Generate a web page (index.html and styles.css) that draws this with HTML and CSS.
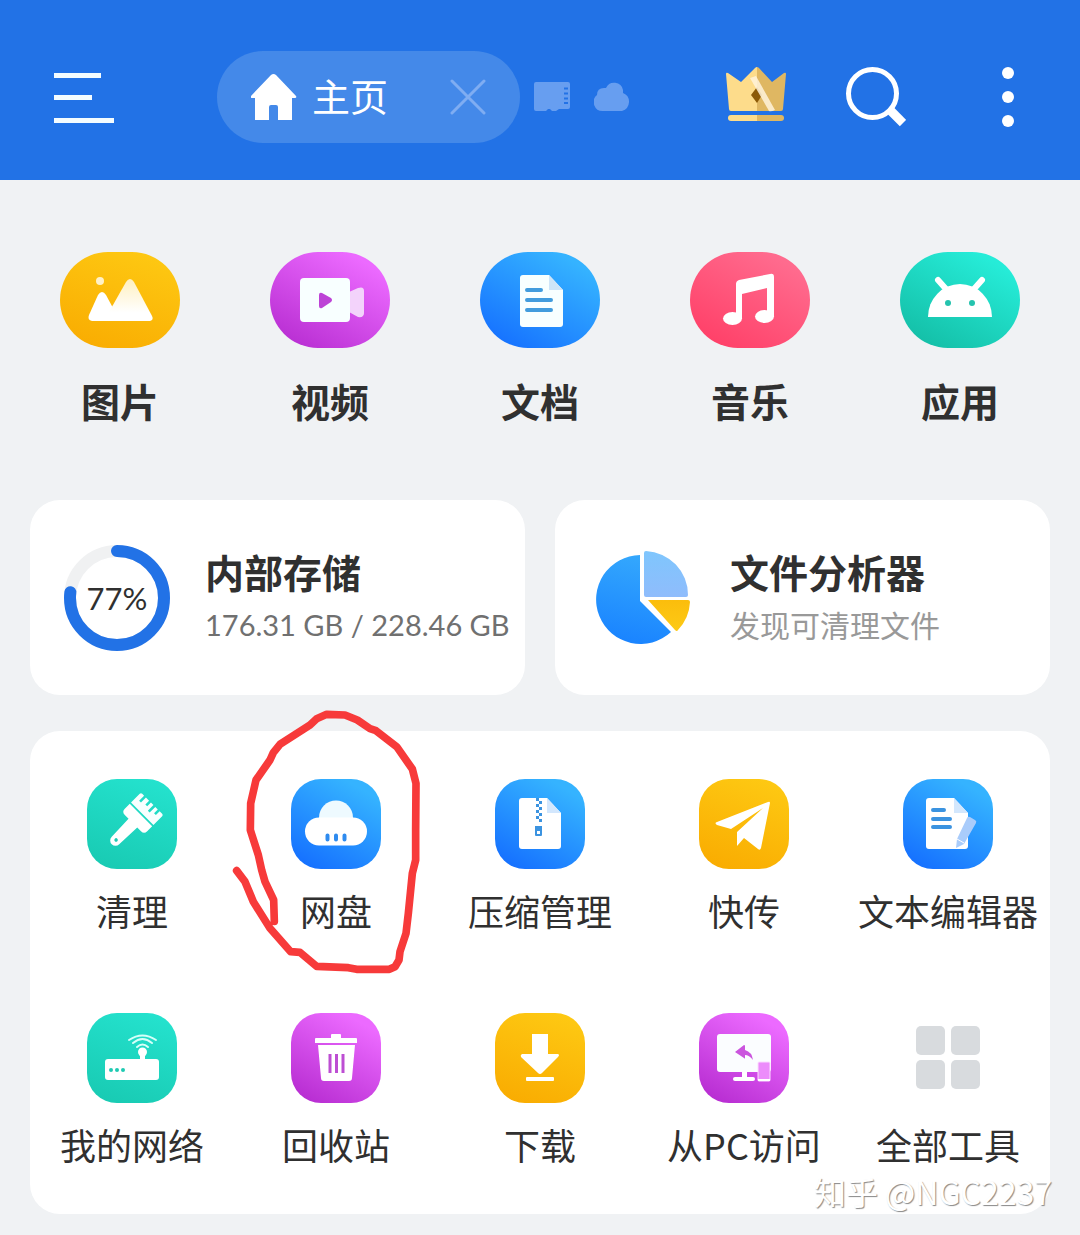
FILE: index.html
```html
<!DOCTYPE html>
<html lang="zh-CN">
<head>
  <meta charset="UTF-8">
  <meta name="viewport" content="width=device-width, initial-scale=1.0">
  <title>主页</title>
  <link rel="stylesheet" href="styles.css">
</head>
<body>

<header>
  <button class="icon-btn menu-btn" aria-label="菜单">
    <svg width="60" height="60" viewBox="0 0 60 60" fill="#f4fcff"><path d="M0 6h47v5H0zM0 28h38v5H0zM0 51h60v5H0z"/></svg>
  </button>
  <div class="tab">
    <a class="tab-home" href="#">
      <svg width="46" height="46" viewBox="0 0 46 46" fill="#fff"><path d="M20 1q2.500-2 5 0L45 22q1 2-1 2h-3v22H27V33q0-2-2-2h-5q-2 0-2 2v13H4V24H1q-2 0-1-2z"/></svg>
      <span>主页</span>
    </a>
    <button class="icon-btn" aria-label="关闭">
      <svg width="36" height="36" viewBox="0 0 36 36" stroke="#7fadf2" stroke-width="3" stroke-linecap="round"><path d="M2 2l32 32M34 2L2 34"/></svg>
    </button>
  </div>
  <div class="places">
    <button class="icon-btn" aria-label="存储卡">
      <svg width="36" height="30" viewBox="0 0 36 30"><path fill="#679ef0" d="M2 0h32q2 0 2 2v23q0 2-2 2h-9l-3 2h-4l-2-2h-2l-2 2H2q-2 0-2-2V2q0-2 2-2z"/><path stroke="#2272e6" stroke-width="2" d="M30 6.500h4M30 11.500h4M30 16.500h4M30 21h4"/></svg>
    </button>
    <button class="icon-btn" aria-label="云盘">
      <svg width="36" height="30" viewBox="0 0 36 30" fill="#679ef0"><path d="M9 29a9 9 0 0 1-6-16q0-7 7-7h2a9 9 0 0 1 17 2v3a9.500 9.500 0 0 1-1 18z"/></svg>
    </button>
  </div>
  <div class="actions">
    <button class="icon-btn" aria-label="会员">
      <svg width="60" height="60" viewBox="0 0 60 60">
        <path fill="#fddc8b" d="M0 7q0-2 2-1l13 9L29 1q1-1 2-1v44H5q-2 0-2-2z"/>
        <path fill="#dfb762" d="M31 0q1 0 2 1l13 14 12-9q2-1 2 1l-3 35q0 2-2 2H31z"/>
        <path fill="#8c5a07" d="M31 20l5 8-5 8-6-8z"/>
        <path fill="#fff3dc" opacity=".85" d="M24 11l6-2 19 34q-4 2-6 1z"/>
        <path fill="#fddc8b" d="M31 48v6H5a3 3 0 0 1 0-6z"/>
        <path fill="#dfb762" d="M31 48h24a3 3 0 0 1 0 6H31z"/>
      </svg>
    </button>
    <button class="icon-btn" aria-label="搜索">
      <svg width="60" height="60" viewBox="0 0 60 60" fill="none" stroke="#fff"><circle cx="26.500" cy="26.500" r="24" stroke-width="5"/><path stroke-width="9" d="M43 42l14 14"/></svg>
    </button>
    <button class="icon-btn" aria-label="更多">
      <svg width="84" height="62" viewBox="0 0 84 62" fill="#fff"><circle cx="42" cy="7" r="6"/><circle cx="42" cy="31" r="6"/><circle cx="42" cy="55" r="6"/></svg>
    </button>
  </div>
</header>

<main>
  <!-- Categories -->
  <nav class="categories">
    <a class="category" href="#">
      <svg class="pill yellow" viewBox="0 0 120 96">
        <defs><linearGradient id="snow" x1="0" y1="0" x2="0" y2="1"><stop offset="0" stop-color="#fff0c0"/><stop offset=".8" stop-color="#fff"/></linearGradient></defs>
        <circle cx="40" cy="29" r="4" fill="#fff1c8"/>
        <path fill="#fff" d="M29 63l9-20q4-6 8 0l14 26H32q-5-1-3-6z"/>
        <path fill="url(#snow)" d="M49 60l17-30q4-6 8 0l18 34q2 4-2 5H47z"/>
      </svg>
      <span>图片</span>
    </a>
    <a class="category" href="#">
      <svg class="pill purple" viewBox="0 0 120 96">
        <path fill="#f3d3fb" d="M79 40l9-4q6-2 6 3v22q0 5-6 4l-9-5z"/>
        <rect x="30" y="26" width="50" height="44" rx="4" fill="#f8ffff"/>
        <path fill="#bd43d6" d="M49 43q0-3 3-2l9 5q2 2 0 4l-9 6q-3 1-3-2z"/>
      </svg>
      <span>视频</span>
    </a>
    <a class="category" href="#">
      <svg class="pill blue" viewBox="0 0 120 96">
        <path fill="#f8ffff" d="M43 23h26l14 15v34q0 3-3 3H43q-3 0-3-3V26q0-3 3-3z"/>
        <path fill="#cfe5f8" d="M69 23l14 15H69z"/>
        <path stroke="#429cdd" stroke-width="4" stroke-linecap="round" d="M47 38h14M47 48h24M47 58h24"/>
      </svg>
      <span>文档</span>
    </a>
    <a class="category" href="#">
      <svg class="pill pink" viewBox="0 0 120 96" fill="#fff">
        <path d="M46 32q0-3 3-4l31-6q4-1 4 3v40h-7V36l-25 6v25h-6z"/>
        <ellipse cx="42.500" cy="66.500" rx="9.500" ry="6.500"/>
        <ellipse cx="74.500" cy="64.500" rx="9.500" ry="6.500"/>
      </svg>
      <span>音乐</span>
    </a>
    <a class="category" href="#">
      <svg class="pill teal" viewBox="0 0 120 96">
        <path fill="#fff" d="M28 65a32 33 0 0 1 64 0z"/>
        <path stroke="#fff" stroke-width="6" stroke-linecap="round" d="M38 28l8 9M82 28l-8 9"/>
        <circle cx="48" cy="51" r="3" fill="#25c3ae"/><circle cx="72" cy="51" r="3" fill="#25c3ae"/>
      </svg>
      <span>应用</span>
    </a>
  </nav>

  <!-- Storage and analyzer -->
  <section class="cards">
    <a class="card" href="#">
      <div class="ring">
        <svg width="106" height="106" viewBox="0 0 106 106" fill="none" stroke-width="12">
          <circle cx="53" cy="53" r="47" stroke="#f0f1f2"/>
          <circle cx="53" cy="53" r="47" stroke="#2272e6" stroke-linecap="round" pathLength="100" stroke-dasharray="77 100" transform="rotate(-90 53 53)"/>
        </svg>
        <span>77%</span>
      </div>
      <div class="card-text">
        <h2>内部存储</h2>
        <p>176.31 GB / 228.46 GB</p>
      </div>
    </a>
    <a class="card" href="#">
      <svg class="pie" width="106" height="106" viewBox="0 0 106 106">
        <defs>
          <linearGradient id="pieBlue" x1=".6" y1="0" x2=".4" y2="1"><stop offset="0" stop-color="#34a8fd"/><stop offset="1" stop-color="#1983ff"/></linearGradient>
          <linearGradient id="pieLight" x1="0" y1="0" x2="0" y2="1"><stop offset="0" stop-color="#7fc6fd"/><stop offset="1" stop-color="#8fbcfc"/></linearGradient>
          <linearGradient id="pieYellow" x1="0" y1="0" x2="0" y2="1"><stop offset="0" stop-color="#fbbd0c"/><stop offset="1" stop-color="#fdca16"/></linearGradient>
        </defs>
        <path fill="url(#pieBlue)" d="M51 10A44.500 44.500 0 1 0 82 87L51 56z"/>
        <path fill="url(#pieLight)" d="M55 8q0-2 2-2a44 44 0 0 1 42 44q0 2-2 2H57q-2 0-2-2z"/>
        <path fill="url(#pieYellow)" d="M59 55h40q2 0 2 2a44 44 0 0 1-12 28q-1 2-3 0z"/>
      </svg>
      <div class="card-text">
        <h2>文件分析器</h2>
        <p class="hint">发现可清理文件</p>
      </div>
    </a>
  </section>

  <!-- Tools -->
  <section class="tools">
    <a class="tool" href="#">
      <svg class="tile teal" viewBox="0 0 90 90">
        <g transform="translate(49 41) rotate(45) scale(.88)">
          <path fill="#f8ffff" d="M-18-10v-14q0-2 2-2h3v8h3v-8h5v6h3v-6h4v9h3v-9h4v6h3v-6h4q2 0 2 2v14z"/>
          <path fill="#fff" d="M-18-8h36V0q0 5-5 5H7l-1 28a6 6 0 0 1-12 0L-7 5h-6q-5 0-5-5z"/>
          <circle cy="32" r="2" fill="#1fcab3"/>
        </g>
      </svg>
      <span>清理</span>
    </a>
    <a class="tool" href="#">
      <svg class="tile blue" viewBox="0 0 90 90">
        <circle cx="45" cy="38.500" r="17" fill="#eefaff"/>
        <rect x="14" y="38.500" width="62" height="28" rx="14" fill="#fff"/>
        <path stroke="#2e8bef" stroke-width="4" stroke-linecap="round" d="M36.500 56.500v4M45 56.500v4M53.500 56.500v4"/>
      </svg>
      <span>网盘</span>
      <!-- hand-drawn mark around the entry -->
      <svg class="scribble" width="204" height="270" viewBox="42 27 612 810" fill="none" stroke="#f73a3a" stroke-width="23" stroke-linecap="round" stroke-linejoin="round"><path d="M163 664L161 600L135 545L125 510L115 465L91 390L92 310L108 240L150 180L160 158L180 133L270 75L290 56L320 43L375 45L412 60L450 86L468 92L530 140L577 207L588 250L587 390L587 480L577 520L565 640L558 700L540 755L537 780L525 800L508 808H410L385 803L290 799L240 757L212 755L150 685L100 605L75 545L50 512"/></svg>
    </a>
    <a class="tool" href="#">
      <svg class="tile blue" viewBox="0 0 90 90">
        <path fill="#fff" d="M27 19h25l14 15v33q0 3-3 3H27q-3 0-3-3V22q0-3 3-3z"/>
        <path fill="#d3e7fd" d="M52 19l14 15H52z"/>
        <path fill="#3b93e0" d="M41 19h3v3h-3zM44 22h3v3h-3zM41 25h3v3h-3zM44 28h3v3h-3zM41 31h3v3h-3zM44 34h3v3h-3zM41 37h3v3h-3zM44 40h3v3h-3zM40 47h7v9q0 1-1 1h-5q-1 0-1-1z"/>
        <path fill="#fff" d="M42 52h3v3h-3z"/>
      </svg>
      <span>压缩管理</span>
    </a>
    <a class="tool" href="#">
      <svg class="tile yellow" viewBox="0 0 90 90" fill="#fff">
        <path d="M69 23q2-1 2 1L62 69q-1 3-3 1L45 59l-7 8V53l26-24-32 21-14-4q-3-2 0-3z"/>
      </svg>
      <span>快传</span>
    </a>
    <a class="tool" href="#">
      <svg class="tile blue" viewBox="0 0 90 90">
        <path fill="#fff" d="M26 19h25l14 15v33q0 3-3 3H26q-3 0-3-3V22q0-3 3-3z"/>
        <path fill="#d3e7fd" d="M51 19l14 15H51z"/>
        <path stroke="#3b93e0" stroke-width="4" stroke-linecap="round" d="M30 31h11M30 40h17M30 48h17"/>
        <path fill="#a9ccfb" d="M64 39q1-2 3-1l5 3q2 1 1 3L61 65l-8 4 1-9z"/>
        <path stroke="#fff" d="M54 60l7 4"/>
      </svg>
      <span>文本编辑器</span>
    </a>
    <a class="tool" href="#">
      <svg class="tile teal" viewBox="0 0 90 90">
        <rect x="18" y="46" width="54" height="21" rx="3" fill="#fff"/>
        <path fill="#fff" d="M53 39h5v8h-5z"/>
        <circle cx="55.500" cy="39" r="4.500" fill="#fff"/>
        <path fill="none" stroke="#d5fff8" stroke-width="2" stroke-linecap="round" d="M50 34q5.500-5 11 0M46 30q9.500-8 19 0M42 27q13.500-9 27 0"/>
        <g fill="#1fcab3"><circle cx="24" cy="57" r="2"/><circle cx="30" cy="57" r="2"/><circle cx="36" cy="57" r="2"/></g>
      </svg>
      <span>我的网络</span>
    </a>
    <a class="tool" href="#">
      <svg class="tile purple" viewBox="0 0 90 90">
        <path fill="#fff" d="M40 25v-3q0-1 1-1h8q1 0 1 1v3h15q1 0 1 1v4H24v-4q0-1 1-1zM27 32h37l-3 33q0 3-3 3H33q-3 0-3-3z"/>
        <path stroke="#bd4ed3" stroke-width="3" d="M39 41v19M45.500 41v19M52 41v19"/>
      </svg>
      <span>回收站</span>
    </a>
    <a class="tool" href="#">
      <svg class="tile yellow" viewBox="0 0 90 90" fill="#fff">
        <path d="M37 21h16v20H37zM27 41h36q2 1 0 3L47 60q-2 2-4 0L26 44q-1-2 1-3z"/>
        <rect x="31" y="64" width="28" height="4" rx="1"/>
      </svg>
      <span>下载</span>
    </a>
    <a class="tool" href="#">
      <svg class="tile purple" viewBox="0 0 90 90">
        <rect x="18" y="21" width="54" height="38" rx="3" fill="#fbfdff"/>
        <path fill="#fff" d="M43 59h5v5h-5z"/>
        <rect x="34" y="64" width="22" height="4" rx="2" fill="#fff"/>
        <path fill="#cb55de" d="M36 39l9-7q1 0 1 1v4q7 2 8 10-4-5-8-5v3q0 1-1 0z"/>
        <rect x="59" y="49" width="12" height="19" rx="1" fill="#ec8cfb" stroke="#fbdcff"/>
        <path stroke="#fff" stroke-width="2" d="M59 67h12"/>
      </svg>
      <span>从PC访问</span>
    </a>
    <a class="tool" href="#">
      <svg class="tile" viewBox="0 0 90 90" fill="#d8dbde">
        <rect x="13" y="13" width="29" height="29" rx="5"/><rect x="48" y="13" width="29" height="29" rx="5"/>
        <rect x="13" y="47" width="29" height="29" rx="5"/><rect x="48" y="47" width="29" height="29" rx="5"/>
      </svg>
      <span>全部工具</span>
    </a>
    <span class="watermark">知乎 @NGC2237</span>
  </section>
</main>

</body>
</html>
```

FILE: styles.css
```css
* { margin: 0; padding: 0; box-sizing: border-box; }
body { background: #f0f2f4; color: #303030; font-family: 'Noto Sans CJK SC', sans-serif; }
a { color: inherit; text-decoration: none; }
svg { display: block; flex-shrink: 0; }
header { background: #2272e6; height: 180px; padding: 14px 30px 0 54px; display: flex; align-items: center; }
.icon-btn { background: none; border: none; cursor: pointer; }
.menu-btn { margin-right: 103px; }
.tab { background: #4489e9; width: 303px; height: 92px; border-radius: 46px; padding: 0 34px; display: flex; align-items: center; justify-content: space-between; }
.tab-home { display: flex; align-items: center; gap: 15px; color: white; font-size: 38px; line-height: 48px; }
.tab-home span { padding-bottom: 4px; }
.places { display: flex; gap: 24px; margin-left: 14px; }
.actions { display: flex; align-items: center; gap: 60px; margin-left: auto; }

main { padding-bottom: 21px; }
.categories { display: grid; grid-template-columns: repeat(5, 1fr); padding: 72px 15px 76px; }
.category { display: flex; flex-direction: column; align-items: center; gap: 28px; font-size: 39px; font-weight: 700; line-height: 48px; }
.pill { width: 120px; height: 96px; border-radius: 48px; }

.yellow { background: linear-gradient(20deg, #f9aa00, #fecb14); }
.purple { background: linear-gradient(30deg, #b92fd3 10%, #ec6aff 85%); }
.blue { background: linear-gradient(30deg, #1672ff 10%, #35b3ff 85%); }
.pink { background: linear-gradient(30deg, #ff4068 10%, #ff6b8e 85%); }
.teal { background: linear-gradient(30deg, #14bfa7 10%, #26ecd8 85%); }
.tile.teal { background: linear-gradient(20deg, #18c9b1, #25e4d0); }

.cards { display: grid; grid-template-columns: 1fr 1fr; gap: 30px; padding: 0 30px; }
.card { background: white; border-radius: 30px; height: 195px; padding-left: 34px; display: flex; align-items: center; gap: 35px; }
.ring { display: grid; place-items: center; }
.ring svg, .ring span { grid-area: 1 / 1; }
.ring span { font-family: Lato, sans-serif; font-size: 31px; }
.card-text { white-space: nowrap; }
.card-text h2 { font-size: 39px; font-weight: 700; line-height: 52px; }
.card-text p { margin-top: 2px; color: #707070; font-family: Lato, 'Noto Sans CJK SC', sans-serif; font-size: 29px; line-height: 52px; }
.card-text .hint { color: #999; font-size: 30px; }

.tools { position: relative; background: white; border-radius: 30px; margin: 36px 30px 0; padding: 48px 0 43px; display: grid; grid-template-columns: repeat(5, 1fr); row-gap: 76px; }
.tool { position: relative; display: flex; flex-direction: column; align-items: center; gap: 14px; font-size: 36px; line-height: 54px; white-space: nowrap; }
.tile { width: 90px; height: 90px; border-radius: 30px; }
.scribble { position: absolute; top: -70px; left: 50%; margin-left: -102px; overflow: visible; pointer-events: none; }
.watermark { position: absolute; right: -2px; bottom: 2px; color: white; font-size: 32px; line-height: 42px; text-shadow: 1px 1px 1px #888; }
```
